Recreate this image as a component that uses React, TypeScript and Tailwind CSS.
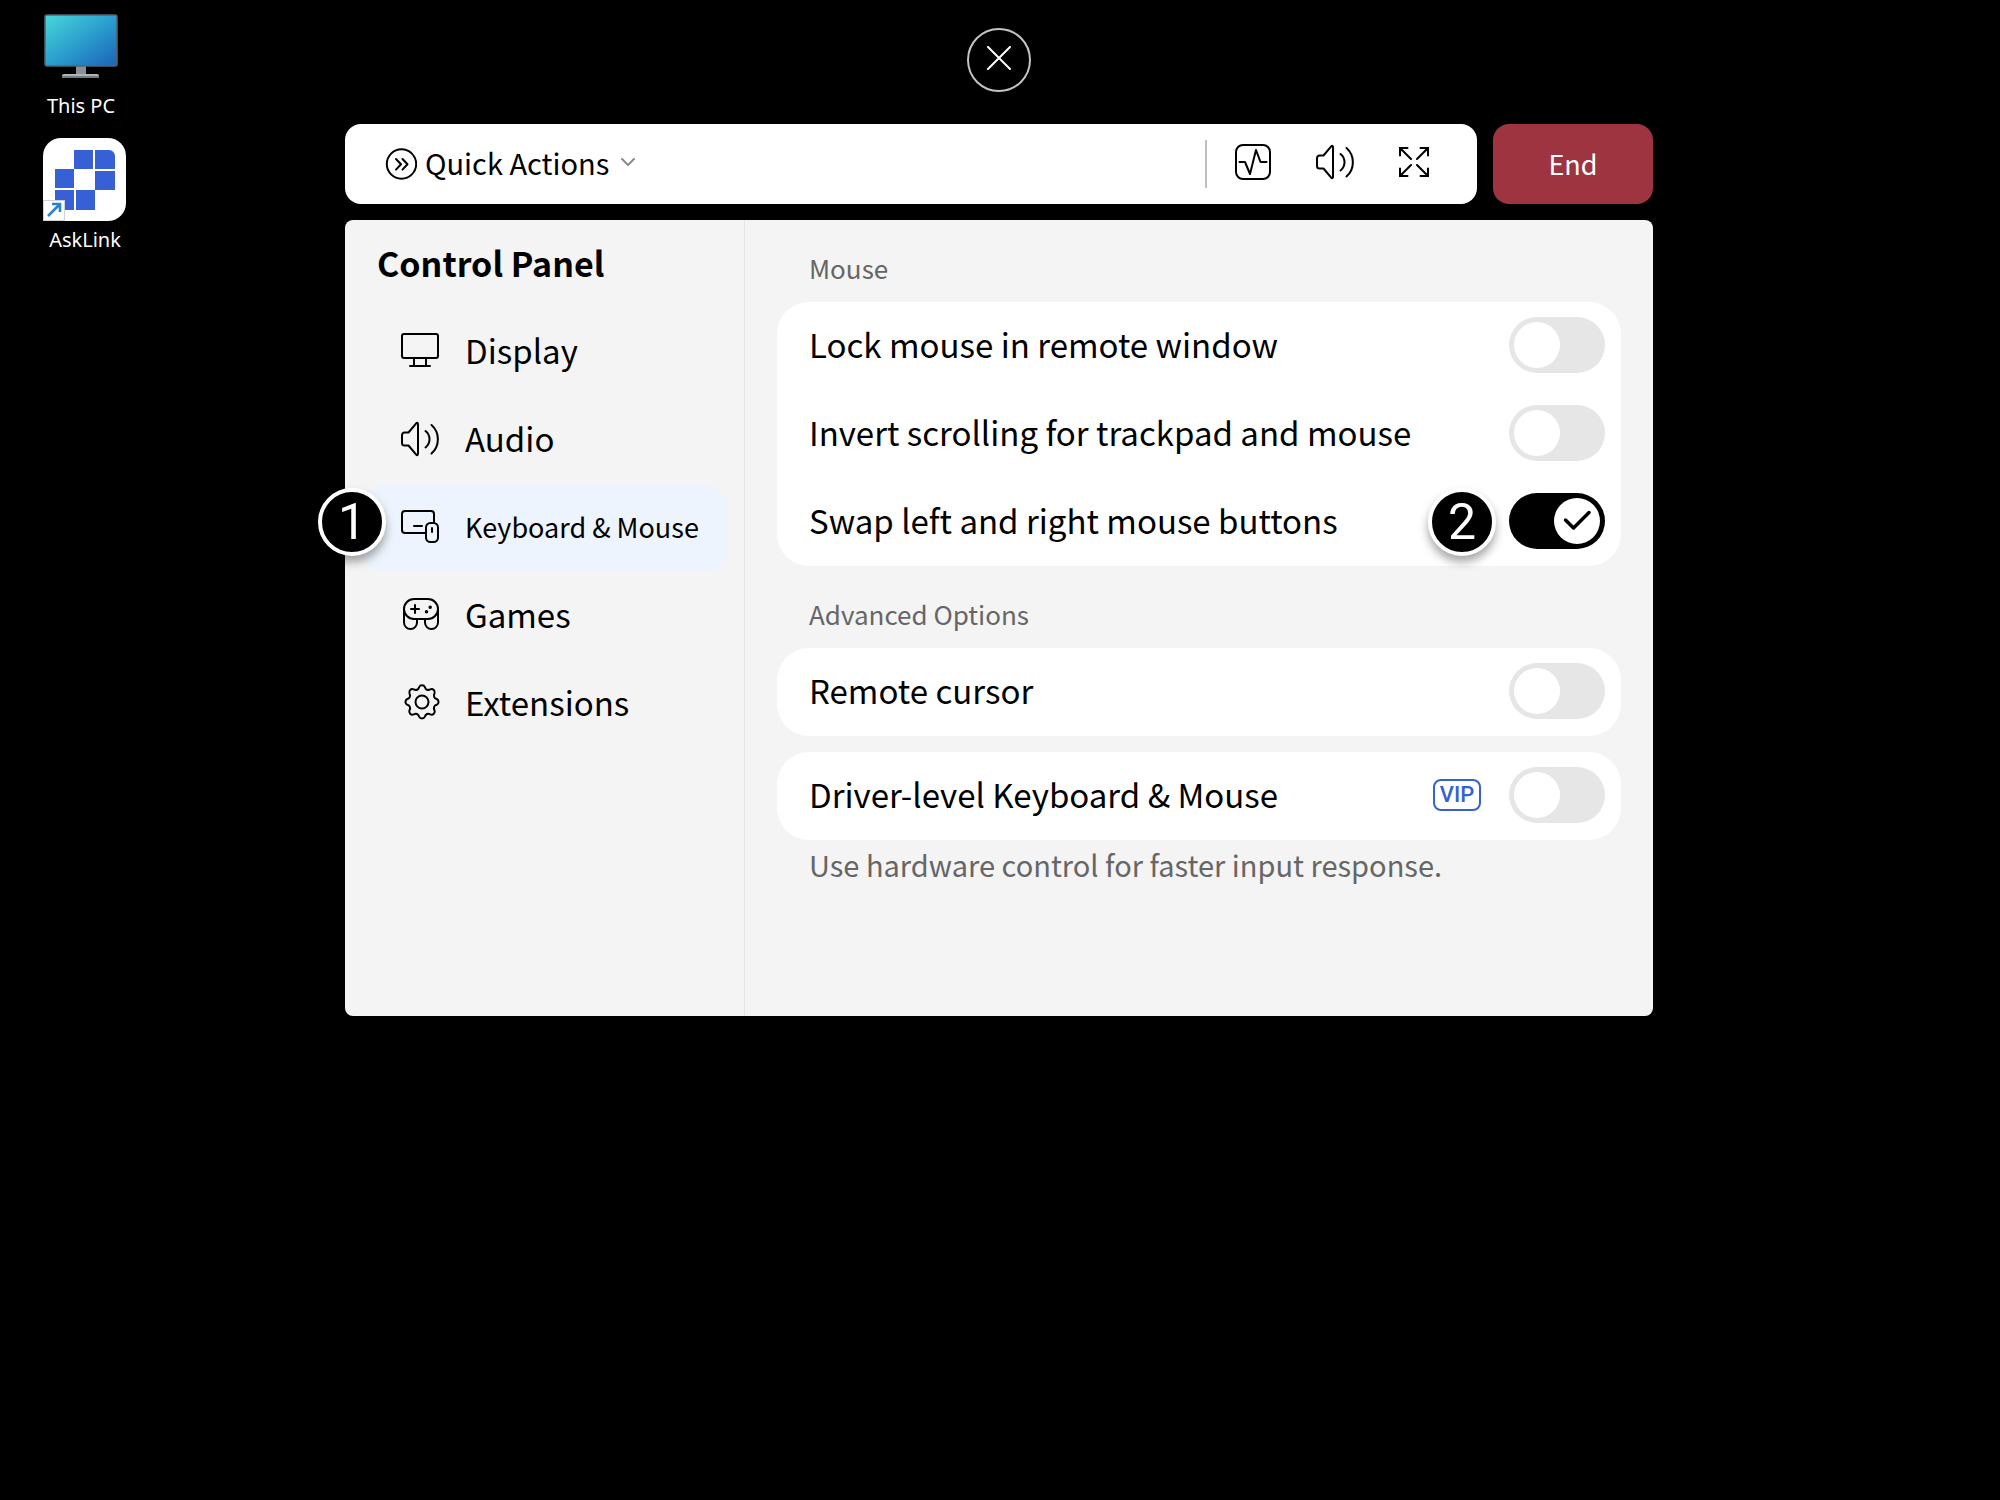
import React, { useState } from 'react';

interface IconProps {
  className?: string;
}

const line = {
  fill: 'none',
  stroke: 'currentColor',
  strokeWidth: 2,
  strokeLinecap: 'round' as const,
  strokeLinejoin: 'round' as const,
};

function DisplayIcon({ className }: IconProps) {
  return (
    <svg width="40" height="40" viewBox="0 0 40 40" className={className} {...line}>
      <rect x="2" y="3" width="36" height="24" rx="2" />
      <path d="M14 27v8M26 27v8M10 35h20" />
    </svg>
  );
}

function AudioIcon({ className }: IconProps) {
  return (
    <svg width="40" height="40" viewBox="0 0 40 40" className={className} {...line}>
      <path d="M4.500 13.500h4L16.200 4.400C17 3.500 18 3.800 18 5v30c0 1.200-1 1.500-1.800.6L8.500 26.500h-4A2.500 2.500 0 0 1 2 24v-8a2.500 2.500 0 0 1 2.500-2.500Z" />
      <path d="M25.500 12a10.500 10.500 0 0 1 0 16.500M31.500 6C40 13.500 40 27 31.500 34.500" />
    </svg>
  );
}

function KeyboardMouseIcon({ className }: IconProps) {
  return (
    <svg width="40" height="40" viewBox="0 0 40 40" className={className} {...line}>
      <path d="M26 26H5a3 3 0 0 1-3-3V7a3 3 0 0 1 3-3h26a3 3 0 0 1 3 3v8" />
      <path d="M14 19h8" />
      <rect x="26" y="16" width="12" height="19" rx="4.500" />
      <path d="M32 21v4" />
    </svg>
  );
}

function GamesIcon({ className }: IconProps) {
  return (
    <svg width="40" height="40" viewBox="0 0 40 40" className={className} {...line}>
      <rect x="4" y="4" width="34" height="20" rx="10" />
      <path d="M4 14v13.500a6.500 6.500 0 0 0 13 0V24M38 14v13.500a6.500 6.500 0 0 1-13 0V24" />
      <path d="M11 14h8M15 10v8" />
      <circle cx="26.500" cy="16.800" r="1" fill="currentColor" strokeWidth="1.500" />
      <circle cx="30.200" cy="12.300" r="1" fill="currentColor" strokeWidth="1.500" />
    </svg>
  );
}

function ExtensionsIcon({ className }: IconProps) {
  return (
    <svg width="40" height="40" viewBox="0 0 40 40" className={className} {...line}>
      <g transform="translate(1 1)">
        <path d="M18.100 3.200a3.200 3.200 0 0 1 5.800 0c.8 2.600 3 3.500 5.400 2.200a3.200 3.200 0 0 1 4.200 4.200c-1.300 2.400-.4 4.600 2.200 5.400a3.200 3.200 0 0 1 0 5.800c-2.600.8-3.500 3-2.200 5.400a3.200 3.200 0 0 1-4.200 4.200c-2.400-1.300-4.600-.4-5.400 2.200a3.200 3.200 0 0 1-5.800 0c-.8-2.600-3-3.500-5.400-2.200a3.200 3.200 0 0 1-4.200-4.200c1.300-2.400.4-4.600-2.200-5.400a3.200 3.200 0 0 1 0-5.800c2.600-.8 3.500-3 2.200-5.400a3.200 3.200 0 0 1 4.200-4.200c2.400 1.300 4.600.4 5.400-2.200Z" />
        <circle cx="21" cy="18" r="6.500" />
      </g>
    </svg>
  );
}

function PulseIcon() {
  return (
    <svg width="36" height="36" viewBox="0 0 36 36" {...line}>
      <rect x="1" y="1" width="34" height="34" rx="7" />
      <path d="M4.500 18h5.500l5 12L21 6l4.500 12h6" />
    </svg>
  );
}

function ExpandIcon() {
  return (
    <svg width="30" height="30" viewBox="0 0 30 30" {...line} strokeLinejoin="miter">
      <path d="M1 8.500V1h7.500M1 1l11 11M21.500 1H29v7.500M29 1L18 12M1 21.500V29h7.500M1 29l11-11M29 21.500V29h-7.500M29 29L18 18" />
    </svg>
  );
}

function QuickIcon() {
  return (
    <svg width="32" height="32" viewBox="0 0 32 32" {...line}>
      <circle cx="16.500" cy="16" r="14.700" />
      <path d="M11 11l5 5.300-5 5.300M17.500 11l5 5.300-5 5.300" />
    </svg>
  );
}

function ThisPcIcon() {
  return (
    <svg width="74" height="66" viewBox="0 0 74 66">
      <defs>
        <linearGradient id="screen" x1="0" y1="0" x2="1" y2="1">
          <stop offset="0" stopColor="#49d8da" />
          <stop offset="0.500" stopColor="#2b9fce" />
          <stop offset="1" stopColor="#1b62b8" />
        </linearGradient>
      </defs>
      <path d="M32 52h10v9H32z" fill="#8a9196" />
      <path d="M20 60h33a2 2 0 0 1 2 2v2H18v-2a2 2 0 0 1 2-2Z" fill="#aeb4b8" />
      <path d="M18 62h37v2H18z" fill="#747b80" />
      <rect x="1" y="1" width="72" height="51" rx="2" fill="url(#screen)" stroke="#52666f" strokeWidth="1.500" />
    </svg>
  );
}

function AskLinkIcon() {
  return (
    <svg width="84" height="84" viewBox="0 0 84 84">
      <path d="M18 0h47a18 18 0 0 1 18 18v47a18 18 0 0 1-18 18H0V18A18 18 0 0 1 18 0Z" fill="#fff" />
      <g fill="#3760d6">
        <path d="M31 12h19v19H31zM52 12h14a6 6 0 0 1 6 6v13H52zM12 31h19v19H12zM52 33h20v19H52zM12 52h19v20H18a6 6 0 0 1-6-6zM33 52h19v20H33z" />
      </g>
      <rect x="0.500" y="62.500" width="21" height="20" fill="#fff" stroke="#d0d2d6" />
      <path d="M5 78L17 66M9 66h8v8" fill="none" stroke="#2a84d2" strokeWidth="2.600" />
    </svg>
  );
}

const navItems = [
  { id: 'display', label: 'Display', Icon: DisplayIcon },
  { id: 'audio', label: 'Audio', Icon: AudioIcon },
  { id: 'keyboard', label: 'Keyboard & Mouse', Icon: KeyboardMouseIcon, step: '1' },
  { id: 'games', label: 'Games', Icon: GamesIcon },
  { id: 'extensions', label: 'Extensions', Icon: ExtensionsIcon },
];

function StepBadge({ children, className }: { children: React.ReactNode; className: string }) {
  return (
    <span
      className={`absolute flex size-[68px] items-center justify-center rounded-full border-4 border-white bg-black font-['Roboto',sans-serif] text-[50px] leading-none text-white shadow-[0_6px_10px_rgba(0,0,0,0.35)] ${className}`}
    >
      {children}
    </span>
  );
}

interface SettingRowProps {
  id: string;
  label: string;
  defaultChecked?: boolean;
  children?: React.ReactNode;
}

function SettingRow({ id, label, defaultChecked, children }: SettingRowProps) {
  return (
    <div className="relative flex h-[88px] items-center pr-4 pb-0.5 pl-8">
      <label htmlFor={id} className="flex-1 pb-0.5 text-[33px] leading-[48px]">{label}</label>
      {children}
      <span className="relative h-14 w-24 shrink-0">
        <input
          id={id}
          type="checkbox"
          role="switch"
          defaultChecked={defaultChecked}
          className="peer block h-14 w-24 cursor-pointer appearance-none rounded-full bg-[#e6e6e6] checked:bg-black"
        />
        <span className="pointer-events-none absolute top-[5px] left-[5px] size-[46px] rounded-full bg-white peer-checked:left-[45px]" />
        <svg
          viewBox="0 0 46 46"
          className="pointer-events-none absolute top-[5px] left-[45px] hidden size-[46px] text-black peer-checked:block"
          {...line}
          strokeWidth={3.5}
        >
          <path d="M11.500 22l8 8L35 14.500" />
        </svg>
      </span>
    </div>
  );
}

export default function App() {
  const [active, setActive] = useState('keyboard');

  return (
    <div className="relative min-h-screen bg-black font-['Noto_Sans_CJK_SC',sans-serif] text-black">
      {/* Desktop shortcuts */}
      <div className="absolute top-3.5 left-8 flex w-[104px] flex-col font-['Noto_Sans',sans-serif] text-xl leading-7 text-white">
        <button className="flex h-[124px] w-[98px] flex-col items-center gap-3">
          <ThisPcIcon />
          This PC
        </button>
        <button className="flex w-[106px] flex-col items-center gap-1">
          <AskLinkIcon />
          AskLink
        </button>
      </div>

      <main className="mx-auto flex w-full max-w-[1310px] flex-col items-center pt-7 pr-0.5">
        <button aria-label="Close" className="flex size-16 items-center justify-center rounded-full border-2 border-[#c4c4c4] text-white">
          <svg width="24" height="24" viewBox="0 0 24 24" className="mb-1" {...line}>
            <path d="M1 1l22 22M23 1L1 23" />
          </svg>
        </button>

        <div className="mt-8 flex w-full gap-4">
          <div className="flex h-20 flex-1 items-center rounded-2xl bg-white pr-12 pl-10">
            <button className="flex items-center gap-2 text-[29px] leading-10">
              <QuickIcon />
              <span className="mb-1">Quick Actions</span>
              <svg width="14" height="9" viewBox="0 0 14 9" className="mb-1 ml-1 text-[#8c8c8c]" {...line}>
                <path d="M1 1l6 6 6-6" />
              </svg>
            </button>
            <div className="mr-7 ml-auto h-12 w-0.5 bg-[#bfbfbf]" />
            <div className="flex items-center gap-11 pb-1">
              <button aria-label="Performance"><PulseIcon /></button>
              <button aria-label="Sound"><AudioIcon /></button>
              <button aria-label="Full screen"><ExpandIcon /></button>
            </div>
          </div>
          <button className="h-20 w-40 rounded-2xl bg-[#9d3440] text-[27px] text-white">End</button>
        </div>

        <div className="mt-4 flex min-h-[796px] w-full rounded-lg bg-[#f4f4f4]">
          <nav className="w-[400px] border-r border-[#e6e6e6]">
            <h1 className="flex h-[88px] items-center pb-1 pl-8 text-[34px] font-bold">Control Panel</h1>
            {navItems.map(({ id, label, Icon, step }) => (
              <div key={id} className="relative px-4">
                <button
                  onClick={() => setActive(id)}
                  className={`flex h-[88px] w-full items-center gap-[25px] rounded-3xl pb-0.5 pl-[39px] whitespace-nowrap ${
                    active === id ? 'bg-[#edf4fd] text-[27px]' : 'text-[33px]'
                  }`}
                >
                  <Icon className="shrink-0" />
                  {label}
                </button>
                {step && <StepBadge className="top-1 -left-[27px]">{step}</StepBadge>}
              </div>
            ))}
          </nav>

          <section className="flex-1 px-8 pt-7 pb-8">
            <h2 className="mb-3.5 pl-8 text-[26px] leading-10 text-[#666]">Mouse</h2>
            <div className="rounded-4xl bg-white">
              <SettingRow id="lock" label="Lock mouse in remote window" />
              <SettingRow id="invert" label="Invert scrolling for trackpad and mouse" />
              <SettingRow id="swap" label="Swap left and right mouse buttons" defaultChecked>
                <StepBadge className="top-2.5 right-[125px]">2</StepBadge>
              </SettingRow>
            </div>

            <h2 className="mt-7 mb-3.5 pl-8 text-[26px] leading-10 text-[#666]">Advanced Options</h2>
            <div className="rounded-4xl bg-white">
              <SettingRow id="cursor" label="Remote cursor" />
            </div>
            <div className="mt-4 rounded-4xl bg-white">
              <SettingRow id="driver" label="Driver-level Keyboard & Mouse">
                <span className="mr-7 flex h-8 w-12 items-center justify-center rounded-lg border-2 border-[#3760d6] font-['Roboto',sans-serif] text-[22px] leading-none font-medium text-[#3760d6]">
                  VIP
                </span>
              </SettingRow>
            </div>
            <p className="mt-1 pl-8 text-[29px] leading-10 text-[#666]">Use hardware control for faster input response.</p>
          </section>
        </div>
      </main>
    </div>
  );
}
